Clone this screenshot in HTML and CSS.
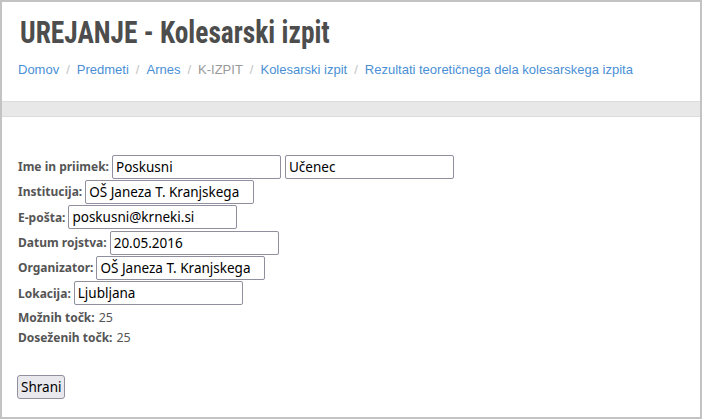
FILE: index.html
```html
<!DOCTYPE html>
<html>
<head>
<meta charset="utf-8">
<link rel="stylesheet" href="styles.css">
</head>
<body>
<div class="frame">
  <header class="head">
    <h1 class="title">UREJANJE - Kolesarski izpit</h1>
    <nav class="crumbs"><a href="#">Domov</a><span class="sep">/</span><a href="#">Predmeti</a><span class="sep">/</span><a href="#">Arnes</a><span class="sep">/</span><span class="plain">K-IZPIT</span><span class="sep">/</span><a href="#">Kolesarski izpit</a><span class="sep">/</span><a href="#">Rezultati teoretičnega dela kolesarskega izpita</a></nav>
  </header>
  <div class="band"></div>
  <form class="form">
    <div class="row"><span class="lbl">Ime in priimek:</span><input class="inp" type="text" value="Poskusni"><input class="inp" type="text" value="Učenec"></div>
    <div class="row"><span class="lbl">Institucija:</span><input class="inp" type="text" value="OŠ Janeza T. Kranjskega"></div>
    <div class="row"><span class="lbl">E-pošta:</span><input class="inp" type="text" value="poskusni@krneki.si"></div>
    <div class="row"><span class="lbl">Datum rojstva:</span><input class="inp" type="text" value="20.05.2016"></div>
    <div class="row"><span class="lbl">Organizator:</span><input class="inp" type="text" value="OŠ Janeza T. Kranjskega"></div>
    <div class="row"><span class="lbl">Lokacija:</span><input class="inp" type="text" value="Ljubljana"></div>
    <div class="stat first"><span class="lbl">Možnih točk:</span> <span class="val">25</span></div>
    <div class="stat"><span class="lbl">Doseženih točk:</span> <span class="val">25</span></div>
    <div class="actions"><button class="btn" type="button">Shrani</button></div>
  </form>
</div>
</body>
</html>
```
FILE: styles.css
```css
html, body {
  margin: 0;
  padding: 0;
  background: #ffffff;
}
.frame {
  box-sizing: border-box;
  width: 702px;
  height: 419px;
  border: 2px solid #c3c3c3;
  background: #fff;
  overflow: hidden;
}
.head {
  padding: 0 0 0 16px;
  height: 99px;
}
.title {
  margin: 0 0 0 2px;
  padding-top: 11px;
  font-family: "Roboto Condensed", "Liberation Sans Narrow", "DejaVu Sans", sans-serif;
  font-stretch: condensed;
  font-weight: bold;
  font-size: 31px;
  line-height: 40px;
  color: #4d4d4d;
  white-space: nowrap;
  transform: scaleX(0.884);
  transform-origin: left center;
}
.crumbs {
  margin-top: 8px;
  font-family: "Liberation Sans", Arial, sans-serif;
  font-size: 13px;
  line-height: 18px;
  white-space: nowrap;
}
.crumbs a {
  color: #4a8fd6;
  text-decoration: none;
}
.crumbs .plain {
  color: #9a9a9a;
}
.crumbs .sep {
  color: #c4c4c4;
  padding: 0 7px;
}
.band {
  height: 14px;
  background: #e8e8e8;
  border-top: 1px solid #dcdcdc;
  border-bottom: 1px solid #dcdcdc;
}
.form {
  padding: 37px 0 0 16px;
}
.row {
  display: flex;
  align-items: center;
  height: 25.33px;
}
.lbl {
  font-family: "Noto Sans", "Open Sans", sans-serif;
  font-weight: bold;
  font-size: 12px;
  color: #555555;
  margin-right: 3px;
}
.inp {
  box-sizing: border-box;
  width: 169px;
  height: 24px;
  margin: 0 4px 0 0;
  padding: 0 3px;
  border: 1px solid #8f8f9d;
  border-radius: 2px;
  font-family: "Noto Sans", "Open Sans", sans-serif;
  font-size: 13.5px;
  color: #000;
  background: #fff;
}
.stat {
  height: 20.5px;
  line-height: 20.5px;
}
.stat.first {
  margin-top: 1px;
}
.stat .lbl { margin-right: 0; }
.val {
  font-family: "Noto Sans", "Open Sans", sans-serif;
  font-size: 12.5px;
  color: #555;
}
.actions {
  padding-top: 27px;
}
.btn {
  box-sizing: border-box;
  height: 24px;
  padding: 0 3px;
  margin-left: -1px;
  border: 1px solid #8f8f9d;
  border-radius: 3px;
  background: #e9e9ed;
  font-family: "Noto Sans", "Open Sans", sans-serif;
  font-size: 13.5px;
  color: #000;
}
```
